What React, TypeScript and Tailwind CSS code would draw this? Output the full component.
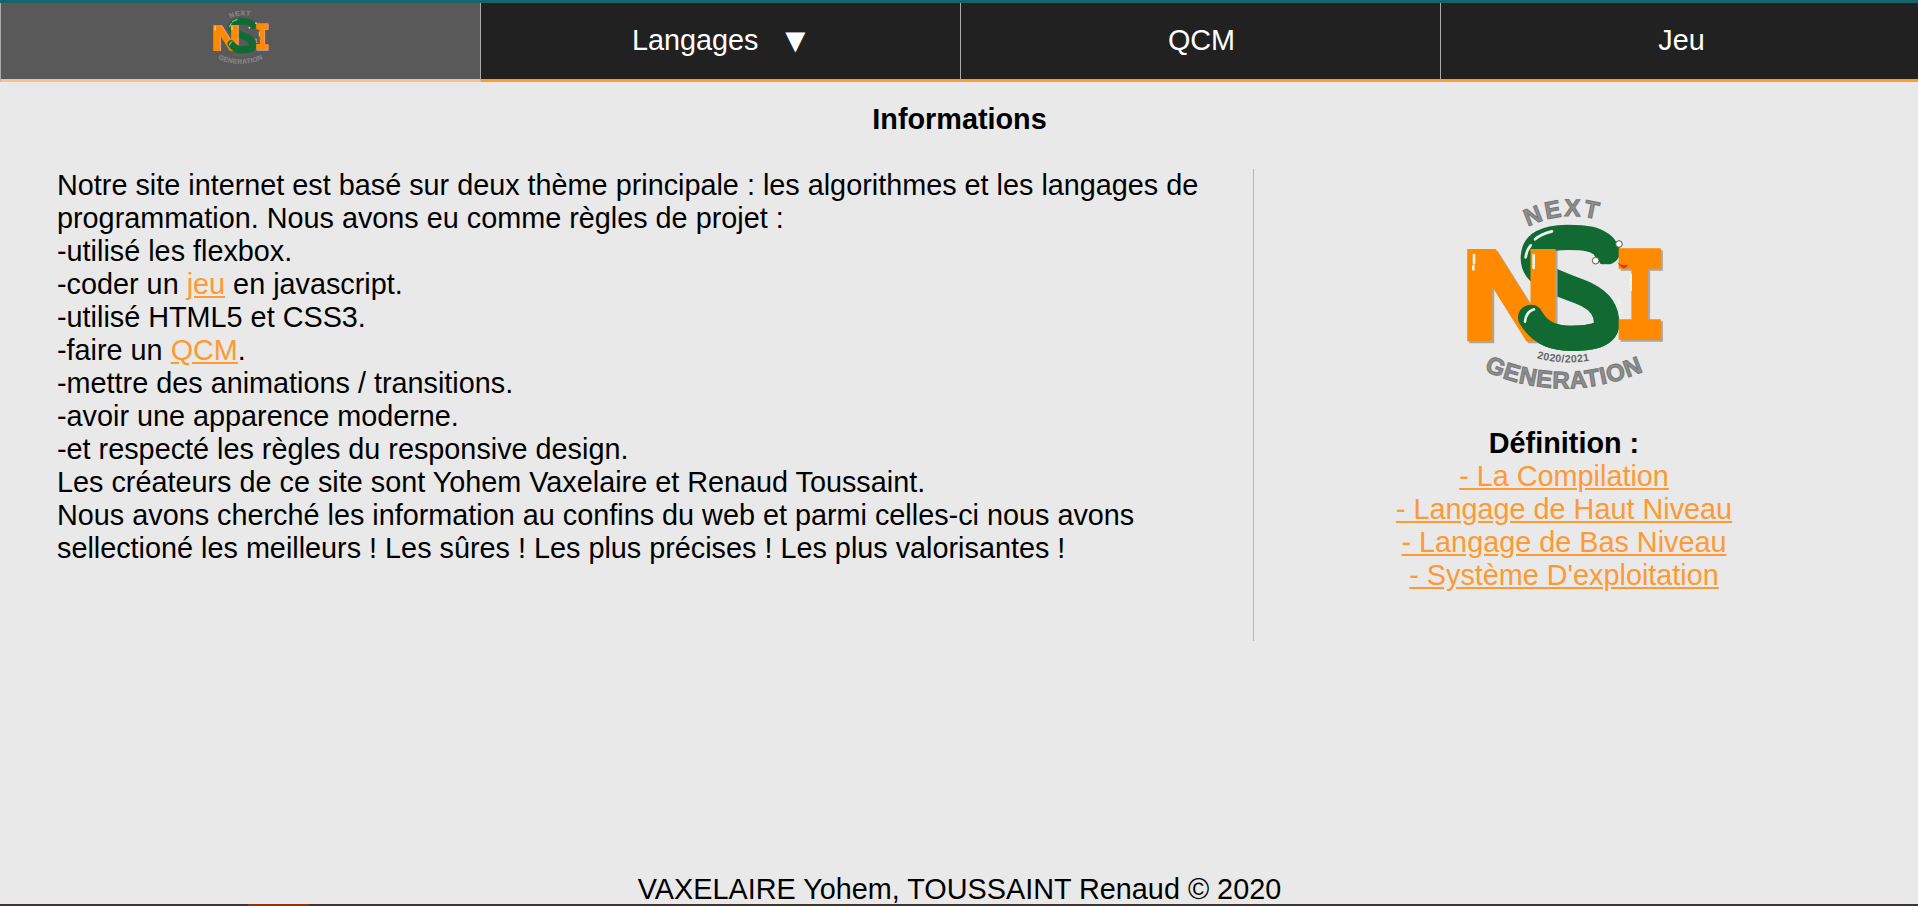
function Logo({ id, className }: { id: string; className: string }) {
  return (
    <svg viewBox="0 0 840 690" className={className}>
      <defs>
        <path id={id + "next"} d="M312 141 Q430 81 556 131" />
        <path id={id + "gen"} d="M180 572 Q412 675 650 578" />
        <path id={id + "year"} d="M338 535 Q430 560 532 535" />
      </defs>
      {/* snake, goes behind the N and then comes back over it */}
      <path d="M550 215 C530 172 470 172 430 172 C365 172 328 190 328 235 C328 300 430 315 490 345 C530 365 548 395 548 430 C548 470 490 475 440 475 C380 475 345 455 320 412" fill="none" stroke="#116a31" strokeWidth="76" strokeLinecap="round" />
      <path d="M540 180 Q590 195 588 225 Q570 258 530 252 L510 225 Z" fill="#116a31" />
      <text x="119" y="481" fill="#a8a8a8" stroke="#a8a8a8" strokeWidth="20" fontFamily="'Liberation Sans', sans-serif" fontWeight="700" fontSize="372" textLength="298" lengthAdjust="spacingAndGlyphs">N</text>
      <text x="113" y="475" fill="#ff8a00" stroke="#ff8a00" strokeWidth="20" fontFamily="'Liberation Sans', sans-serif" fontWeight="700" fontSize="372" textLength="298" lengthAdjust="spacingAndGlyphs">N</text>
      <path d="M548 430 C548 470 490 475 440 475 C380 475 345 455 320 412" fill="none" stroke="#116a31" strokeWidth="76" strokeLinecap="round" />
      <text x="574" y="478" fill="#a8a8a8" stroke="#a8a8a8" strokeWidth="16" fontFamily="'DejaVu Sans Mono', monospace" fontWeight="700" fontSize="355" textLength="159" lengthAdjust="spacingAndGlyphs">I</text>
      <text x="568" y="472" fill="#ff8a00" stroke="#ff8a00" strokeWidth="16" fontFamily="'DejaVu Sans Mono', monospace" fontWeight="700" fontSize="355" textLength="159" lengthAdjust="spacingAndGlyphs">I</text>
      <path d="M578 246 Q600 262 612 252 Q606 268 596 264 Q588 258 578 246" fill="#e8311a" />
      <circle cx="585" cy="192" r="10" fill="#fff" stroke="#555" strokeWidth="3" />
      <circle cx="515" cy="242" r="10" fill="#fff" stroke="#555" strokeWidth="3" />
      <g fill="none" stroke="#e9f5ec" strokeWidth="8" strokeLinecap="round">
        <path d="M333 178 Q350 162 384 154" />
        <path d="M305 232 Q308 210 320 196" />
        <path d="M303 425 Q306 395 330 388" />
        <path d="M584 360 L588 374" />
        <path d="M592 392 L592 398" />
        <path d="M150 225 L150 250" />
        <path d="M148 258 L148 268" />
        <path d="M329 225 L329 250" />
        <path d="M329 256 L329 264" />
        <path d="M620 285 L620 315" />
        <path d="M620 322 L620 330" />
      </g>
      <g fontFamily="'Liberation Sans', sans-serif" fontWeight="700">
        <text fill="#8e8e8e" stroke="#777" strokeWidth="3" fontSize="72" letterSpacing="7">
          <textPath href={"#" + id + "next"}>NEXT</textPath>
        </text>
        <text fill="#8e8e8e" stroke="#777" strokeWidth="3" fontSize="72" letterSpacing="2">
          <textPath href={"#" + id + "gen"}>GENERATION</textPath>
        </text>
        <text fill="#666" fontSize="32" letterSpacing="1">
          <textPath href={"#" + id + "year"}>2020/2021</textPath>
        </text>
      </g>
    </svg>
  );
}

function NavCell({ children, className }: { children: React.ReactNode; className?: string }) {
  return (
    <a className={"flex items-center justify-center border-r border-[#aaaaaa] last:border-r-0 border-b-[3px] border-b-[#ff9933] bg-[#212121] text-white text-[28.8px] leading-[33px] pb-[1px] " + (className ?? "")}>
      {children}
    </a>
  );
}

export default function App() {
  return (
    <div className="h-screen overflow-hidden flex flex-col bg-[#e9e9e9] text-black font-['Liberation_Sans',Arial,sans-serif] leading-[33px]">
      <div className="border-t-[3px] border-[#17656b]">
        <nav className="grid grid-cols-[481px_480px_480px_477px] h-[79px]">
          <a className="flex justify-center items-start pt-[2px] bg-[#595959] border-l border-r border-[#aaaaaa] border-b-[3px] border-b-[#f7c188]">
            <Logo id="small" className="w-[79px] h-[65px]" />
          </a>
          <NavCell className="pl-[3px]">
            Langages<span className="ml-[20px] text-[34px]">▼</span>
          </NavCell>
          <NavCell className="pl-[2px]">QCM</NavCell>
          <NavCell className="pl-[4px]">Jeu</NavCell>
        </nav>
      </div>

      <main className="flex-1 min-h-0">
        <h1 className="text-center text-[28.8px] font-bold mt-[21px] pl-[1px]">Informations</h1>
        <div className="flex mt-[33px] ml-[57px] mr-[44px]">
          <div className="w-[1197px] border-r border-[#b5b5b5] text-[28.8px] h-[472px] pr-[40px]">
            <p>Notre site internet est basé sur deux thème principale : les algorithmes et les langages de programmation. Nous avons eu comme règles de projet :</p>
            <p>-utilisé les flexbox.</p>
            <p>-coder un <a className="text-[#ff9933] underline">jeu</a> en javascript.</p>
            <p>-utilisé HTML5 et CSS3.</p>
            <p>-faire un <a className="text-[#ff9933] underline">QCM</a>.</p>
            <p>-mettre des animations / transitions.</p>
            <p>-avoir une apparence moderne.</p>
            <p>-et respecté les règles du responsive design.</p>
            <p>Les créateurs de ce site sont Yohem Vaxelaire et Renaud Toussaint.</p>
            <p>Nous avons cherché les information au confins du web et parmi celles-ci nous avons sellectioné les meilleurs ! Les sûres ! Les plus précises ! Les plus valorisantes !</p>
          </div>
          <div className="flex-1 flex flex-col items-center text-[28.8px]">
            <Logo id="big" className="w-[280px] h-[230px] mt-[11px]" />
            <p className="font-bold mt-[17px]">Définition :</p>
            <a className="text-[#ff9933] underline">- La Compilation</a>
            <a className="text-[#ff9933] underline">- Langage de Haut Niveau</a>
            <a className="text-[#ff9933] underline">- Langage de Bas Niveau</a>
            <a className="text-[#ff9933] underline">- Système D'exploitation</a>
          </div>
        </div>
      </main>

      <footer className="text-center text-[28.8px] h-[33px] leading-[36px] pl-[1px]">VAXELAIRE Yohem, TOUSSAINT Renaud © 2020</footer>
      <div className="h-[2px] bg-[#3f3532] flex">
        <div className="ml-[248px] w-[61px] bg-[#8a3412]" />
      </div>
    </div>
  );
}
